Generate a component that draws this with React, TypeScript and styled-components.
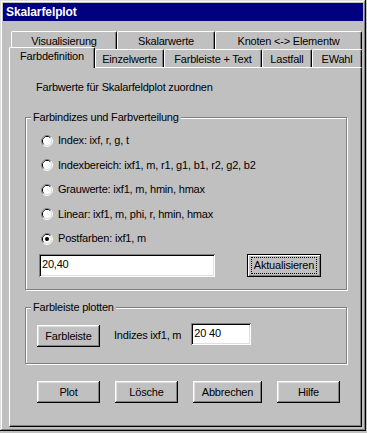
import React from 'react';
import styled, { createGlobalStyle } from 'styled-components';

const GlobalStyle = createGlobalStyle`
  html, body {
    margin: 0;
    padding: 0;
    background: #c0c0c0;
  }
`;

const Window = styled.div`
  box-sizing: border-box;
  width: 366px;
  height: 431px;
  padding: 3px;
  background: #c0c0c0;
  box-shadow: inset -1px -1px #000, inset 1px 1px #dfdfdf, inset -2px -2px #808080, inset 2px 2px #fff;
  font-family: 'Liberation Sans', Arial, sans-serif;
  font-size: 11px;
  letter-spacing: -0.2px;
  color: #000;
`;

const TitleBar = styled.div`
  height: 18px;
  line-height: 18px;
  padding-left: 3px;
  background: #000080;
  color: #fff;
  font-weight: bold;
  font-size: 12px;
  letter-spacing: -0.1px;
`;

const Body = styled.div`
  padding: 10px 0 0 6px;
`;

const TabRow = styled.div<{ $indent?: number }>`
  display: flex;
  align-items: flex-start;
  height: 18px;
  padding-left: ${(p) => p.$indent ?? 0}px;
`;

const Tab = styled.div<{ $w: number; $active?: boolean }>`
  box-sizing: border-box;
  position: relative;
  z-index: ${(p) => (p.$active ? 2 : 1)};
  width: ${(p) => p.$w}px;
  height: ${(p) => (p.$active ? 21 : 18)}px;
  margin-top: ${(p) => (p.$active ? -2 : 0)}px;
  padding-top: ${(p) => (p.$active ? 0 : 1)}px;
  border-left: 1px solid #fff;
  border-top: 1px solid #fff;
  border-right: 1px solid #000;
  border-radius: 2px 2px 0 0;
  box-shadow: inset -1px 0 #808080;
  background: #c0c0c0;
  line-height: 16px;
  text-align: center;
  white-space: nowrap;
`;

const Panel = styled.div`
  box-sizing: border-box;
  display: flex;
  flex-direction: column;
  align-items: flex-start;
  width: 353px;
  height: 360px;
  padding: 13px 0 0 15px;
  border-top: 1px solid #fff;
  border-left: 1px solid #fff;
  border-right: 1px solid #000;
  border-bottom: 1px solid #000;
  box-shadow: inset -1px -1px #808080;
`;

const Heading = styled.div`
  margin-left: 11px;
  line-height: 13px;
`;

const GroupBox = styled.div<{ $top: number; $pad: string }>`
  box-sizing: border-box;
  position: relative;
  width: 322px;
  margin-top: ${(p) => p.$top}px;
  padding: ${(p) => p.$pad};
  border: 1px solid #808080;
  box-shadow: inset 1px 1px #fff, 1px 1px #fff;
`;

const Caption = styled.span`
  position: absolute;
  top: -7px;
  left: 5px;
  padding: 0 2px;
  line-height: 13px;
  background: #c0c0c0;
  white-space: nowrap;
`;

const RadioList = styled.div`
  display: flex;
  flex-direction: column;
  gap: 11.5px;
`;

const RadioRow = styled.label`
  display: flex;
  align-items: center;
  gap: 5px;
  height: 13px;
  margin-left: 2px;
  line-height: 13px;
  white-space: nowrap;
`;

const RadioMark = styled.svg`
  flex-shrink: 0;
  display: block;
`;

const Row = styled.div<{ $top?: number }>`
  display: flex;
  align-items: flex-start;
  margin-top: ${(p) => p.$top ?? 0}px;
`;

const Field = styled.input<{ $w: number; $h: number; $left?: number }>`
  box-sizing: border-box;
  width: ${(p) => p.$w}px;
  height: ${(p) => p.$h}px;
  margin: 0 0 0 ${(p) => p.$left ?? 0}px;
  padding: 1px 2px ${(p) => p.$h - 18}px 3px;
  border: 0;
  border-radius: 0;
  background: #fff;
  box-shadow: inset 1px 1px #808080, inset -1px -1px #fff, inset 2px 2px #000, inset -2px -2px #dfdfdf;
  font: inherit;
  letter-spacing: inherit;
  line-height: 13px;
  color: #000;
  outline: none;
`;

const Button = styled.button<{ $w: number; $h?: number; $left?: number; $top?: number; $default?: boolean }>`
  box-sizing: border-box;
  display: flex;
  align-items: center;
  justify-content: center;
  width: ${(p) => p.$w}px;
  height: ${(p) => p.$h ?? 22}px;
  margin: ${(p) => p.$top ?? 0}px 0 0 ${(p) => p.$left ?? 0}px;
  padding: 0;
  border: ${(p) => (p.$default ? '1px solid #000' : '0')};
  border-radius: 0;
  background: #c0c0c0;
  box-shadow: ${(p) =>
    p.$default
      ? 'inset 1px 1px #fff, inset -1px -1px #808080'
      : 'inset -1px -1px #000, inset 1px 1px #fff, inset -2px -2px #808080, inset 2px 2px #dfdfdf'};
  font: inherit;
  letter-spacing: inherit;
  line-height: 13px;
  color: #000;
  white-space: nowrap;
`;

const FocusRect = styled.span`
  padding: 1px 2px;
  border: 1px dotted #000;
`;

const Label = styled.span<{ $left: number }>`
  margin: 6px 0 0 ${(p) => p.$left}px;
  line-height: 13px;
  white-space: nowrap;
`;

const ButtonBar = styled.div`
  display: flex;
  gap: 15px;
  margin-top: 17px;
  padding-left: 12px;
`;

const Radio = ({ checked, children }: { checked?: boolean; children: React.ReactNode }) => (
  <RadioRow>
    <RadioMark width="12" height="12" viewBox="0 0 12 12">
      <path d="M2.11 9.89A5.5 5.5 0 0 1 9.89 2.11" fill="none" stroke="#808080" />
      <path d="M9.89 2.11A5.5 5.5 0 0 1 2.11 9.89" fill="none" stroke="#fff" />
      <path d="M2.82 9.18A4.5 4.5 0 0 1 9.18 2.82" fill="none" stroke="#000" />
      <path d="M9.18 2.82A4.5 4.5 0 0 1 2.82 9.18" fill="none" stroke="#dfdfdf" />
      <circle cx="6" cy="6" r="4" fill="#fff" />
      {checked && <circle cx="6" cy="6" r="2" fill="#000" />}
    </RadioMark>
    {children}
  </RadioRow>
);

const backTabs = [
  { label: 'Visualisierung', w: 106 },
  { label: 'Skalarwerte', w: 98 },
  { label: 'Knoten <-> Elementw', w: 147 },
];

const frontTabs = [
  { label: 'Farbdefinition', w: 86, active: true },
  { label: 'Einzelwerte', w: 69 },
  { label: 'Farbleiste + Text', w: 98 },
  { label: 'Lastfall', w: 50 },
  { label: 'EWahl', w: 50 },
];

const options = [
  'Index: ixf, r, g, t',
  'Indexbereich: ixf1, m, r1, g1, b1, r2, g2, b2',
  'Grauwerte: ixf1, m, hmin, hmax',
  'Linear: ixf1, m, phi, r, hmin, hmax',
  'Postfarben: ixf1, m',
];

const App = (): JSX.Element => {
  return (
    <>
      <GlobalStyle />
      <Window>
        <TitleBar>Skalarfelplot</TitleBar>
        <Body>
          <TabRow $indent={2}>
            {backTabs.map((t) => (
              <Tab key={t.label} $w={t.w}>{t.label}</Tab>
            ))}
          </TabRow>
          <TabRow>
            {frontTabs.map((t) => (
              <Tab key={t.label} $w={t.w} $active={t.active}>{t.label}</Tab>
            ))}
          </TabRow>
          <Panel>
            <Heading>Farbwerte für Skalarfeldplot zuordnen</Heading>

            <GroupBox $top={23} $pad='16px 0 12px 13px'>
              <Caption>Farbindizes und Farbverteilung</Caption>
              <RadioList>
                {options.map((o, i) => (
                  <Radio key={o} checked={i === options.length - 1}>{o}</Radio>
                ))}
              </RadioList>
              <Row $top={9}>
                <Field $w={176} $h={23} defaultValue='20,40' />
                <Button $w={74} $h={23} $left={32} $default>
                  <FocusRect>Aktualisieren</FocusRect>
                </Button>
              </Row>
            </GroupBox>

            <GroupBox $top={17} $pad='15px 0 16px 11px'>
              <Caption>Farbleiste plotten</Caption>
              <Row>
                <Button $w={63} $top={2}>Farbleiste</Button>
                <Label $left={14}>Indizes ixf1, m</Label>
                <Field $w={60} $h={22} $left={10} defaultValue='20 40' />
              </Row>
            </GroupBox>

            <ButtonBar>
              <Button $w={63}>Plot</Button>
              <Button $w={63}>Lösche</Button>
              <Button $w={69}>Abbrechen</Button>
              <Button $w={63}>Hilfe</Button>
            </ButtonBar>
          </Panel>
        </Body>
      </Window>
    </>
  );
};

export default App;
